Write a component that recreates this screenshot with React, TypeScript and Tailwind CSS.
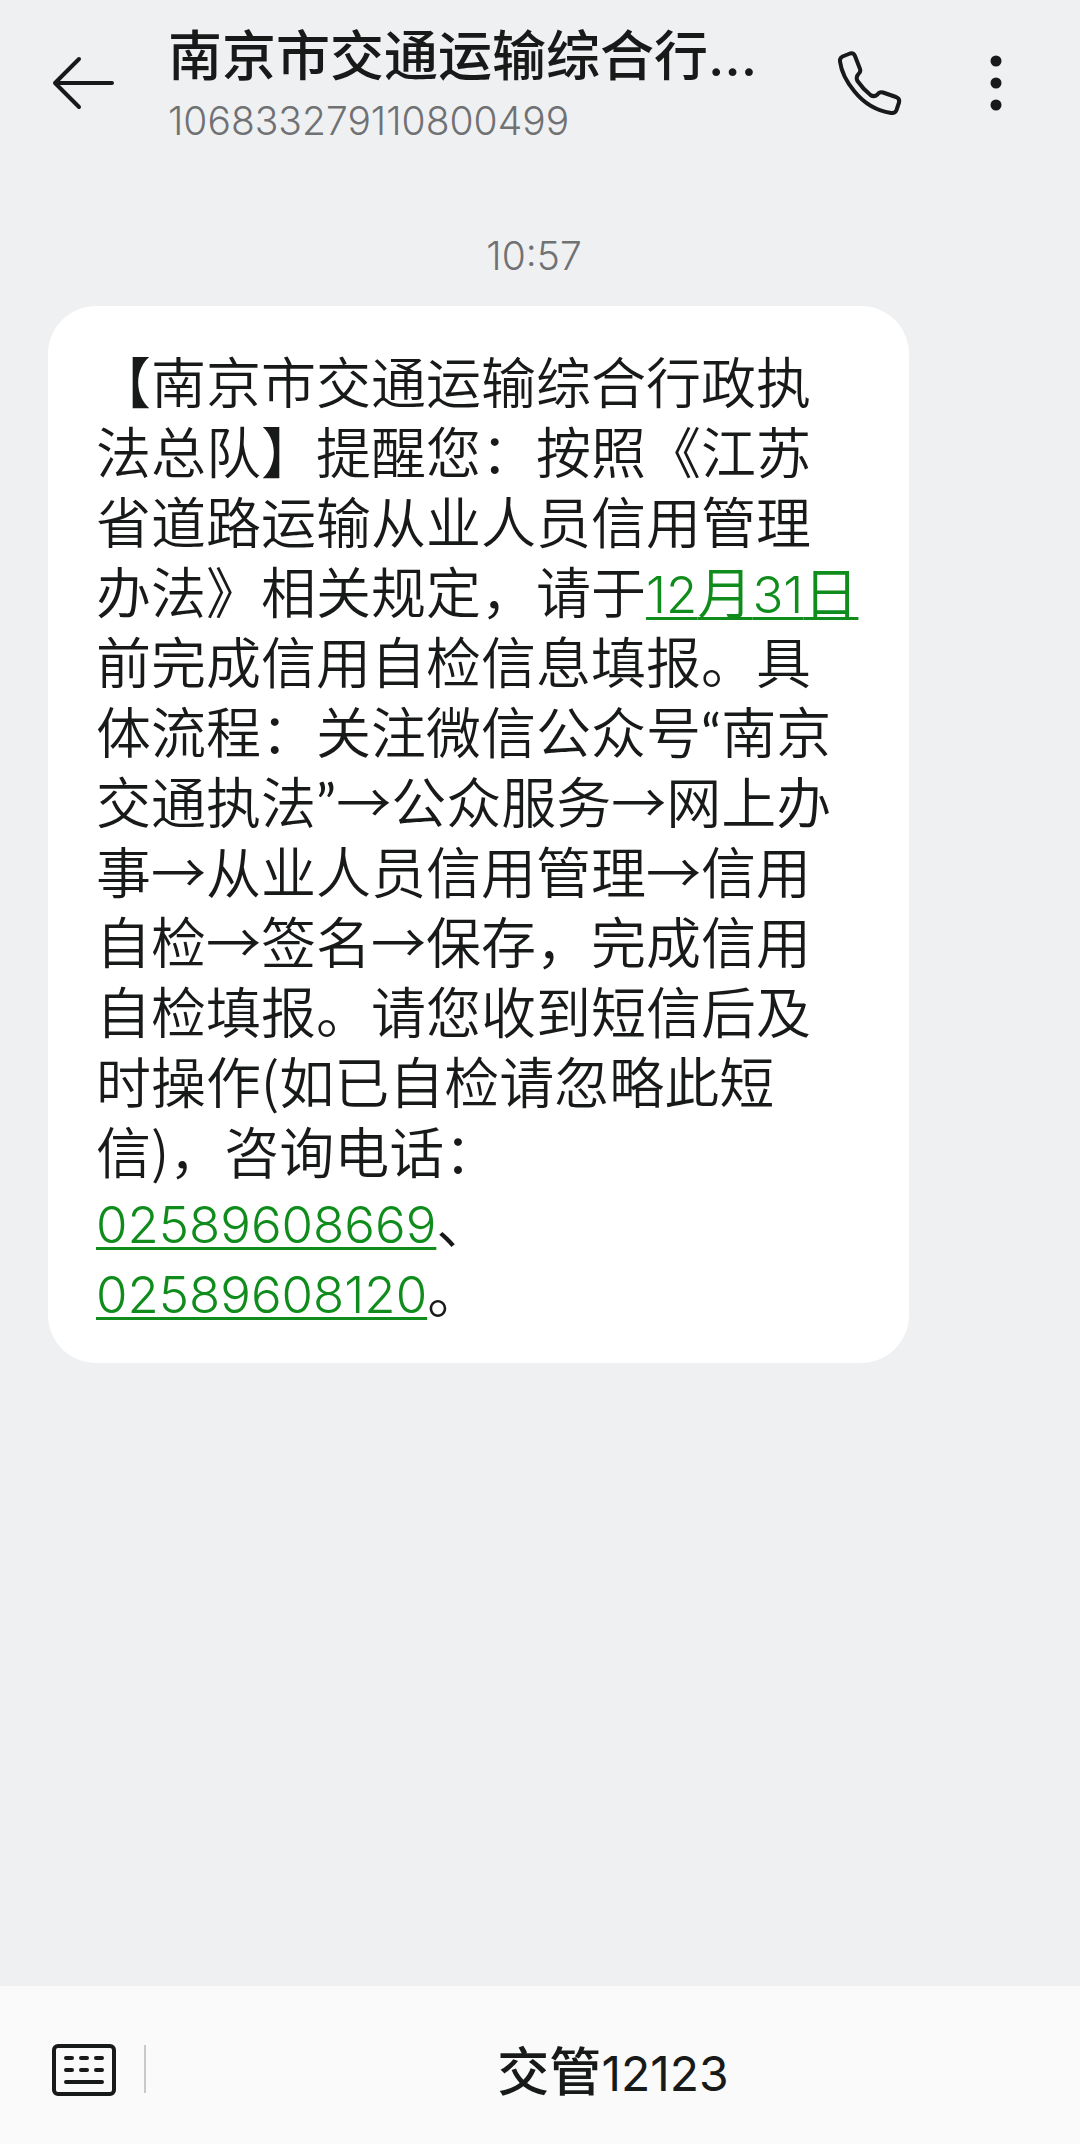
import type { ReactNode } from "react";

function Link({ href, children }: { href: string; children: ReactNode }) {
  return (
    <a
      href={href}
      className="leading-none text-[#108c1d] underline decoration-[3px] underline-offset-[4px] [text-decoration-skip-ink:none]"
    >
      {children}
    </a>
  );
}

function Digits({ children }: { children: ReactNode }) {
  return <span className="font-['Inter',sans-serif] text-[51px] leading-none font-[350]">{children}</span>;
}

function Quote({ children }: { children: ReactNode }) {
  return <span className="font-['Lato',sans-serif] leading-none font-normal">{children}</span>;
}

function BackIcon() {
  return (
    <svg width="64" height="56" viewBox="0 0 64 56" fill="none" stroke="currentColor" strokeWidth="4" strokeLinecap="round" strokeLinejoin="round" aria-hidden="true">
      <path d="M27 4L3 28L27 52M3 28H60" />
    </svg>
  );
}

function PhoneIcon() {
  return (
    <svg width="64" height="64" viewBox="0 0 64 64" fill="none" stroke="currentColor" strokeWidth="4" strokeLinecap="round" strokeLinejoin="round" aria-hidden="true">
      <path d="M4.500 5.500L12 2.500Q15.500 1.500 17 5L22 18Q23 21 20.500 23Q17.500 26 19.500 30Q25 38 32.500 44Q36 46.500 39.500 43.500Q41.500 40.500 45 41.500L58 46Q62 47.500 61 51.500L58.500 59Q57 62.500 53 62Q31 58.500 16.500 40.500Q4 25.500 2 10.500Q1.500 7 4.500 5.500Z" />
    </svg>
  );
}

function MoreIcon() {
  return (
    <svg width="12" height="56" viewBox="0 0 12 56" fill="currentColor" aria-hidden="true">
      <circle cx="6" cy="6" r="5.500" />
      <circle cx="6" cy="28" r="5.500" />
      <circle cx="6" cy="50" r="5.500" />
    </svg>
  );
}

function KeyboardIcon() {
  return (
    <svg width="64" height="52" viewBox="0 0 64 52" fill="none" stroke="currentColor" strokeWidth="4" strokeLinecap="round" aria-hidden="true">
      <rect x="2" y="2" width="60" height="48" rx="4" />
      <path d="M14 14H20M29 14H35M44 14H50M14 26H20M29 26H35M44 26H50M14 38H50" />
    </svg>
  );
}

const lines: ReactNode[] = [
  "【南京市交通运输综合行政执",
  "法总队】提醒您：按照《江苏",
  "省道路运输从业人员信用管理",
  <>办法》相关规定，请于<Link href="#date"><Digits>12</Digits>月<Digits>31</Digits>日</Link></>,
  "前完成信用自检信息填报。具",
  <>体流程：关注微信公众号<Quote>“</Quote>南京</>,
  <>交通执法<Quote>”</Quote>→公众服务→网上办</>,
  "事→从业人员信用管理→信用",
  "自检→签名→保存，完成信用",
  "自检填报。请您收到短信后及",
  "时操作(如已自检请忽略此短",
  "信)，咨询电话：",
  <><Link href="tel:02589608669"><Digits>02589608669</Digits></Link>、</>,
  <><Link href="tel:02589608120"><Digits>02589608120</Digits></Link>。</>,
];

export default function App() {
  return (
    <div
      lang="zh-CN"
      className="flex min-h-screen flex-col bg-[#eff0f2] font-['Noto_Sans_CJK_SC',sans-serif] text-[#181919]"
    >
      <header className="flex items-center pt-5 pr-[78px] pl-[52px]">
        <button type="button" aria-label="返回" className="shrink-0">
          <BackIcon />
        </button>
        <div className="ml-[52px] min-w-0 flex-1">
          <h1 className="text-[54px] leading-[66px] font-medium whitespace-nowrap">
            南京市交通运输综合行<span className="font-['Inter',sans-serif] leading-none">…</span>
          </h1>
          <p className="mt-[10px] font-['Inter',sans-serif] text-[39px] leading-[50px] font-light text-[#707172]">106833279110800499</p>
        </div>
        <button type="button" aria-label="拨打电话" className="mr-[88px] shrink-0">
          <PhoneIcon />
        </button>
        <button type="button" aria-label="更多" className="shrink-0">
          <MoreIcon />
        </button>
      </header>

      <main className="flex-1 pt-[82px] pr-[60px] pl-12">
        <time className="block text-center font-['Inter',sans-serif] text-[39px] leading-[56px] font-light text-[#707172]">10:57</time>
        <p className="mt-[22px] w-full max-w-[861px] rounded-[48px] bg-white px-12 pt-[38px] pb-[39px] text-[55px] leading-[70px] font-[350] [text-spacing-trim:space-all]">
          {lines.map((line, i) => (
            <span key={i} className="block whitespace-nowrap">
              {line}
            </span>
          ))}
        </p>
      </main>

      <footer className="flex h-[158px] items-center bg-[#fafafa] pl-[52px]">
        <button type="button" aria-label="键盘" className="mt-[10px] shrink-0">
          <KeyboardIcon />
        </button>
        <div className="mt-2 ml-7 h-12 w-[2px] shrink-0 bg-[#c9c9c9]" />
        <button type="button" className="mt-2 flex-1 text-center text-[52px] leading-[64px] font-medium">
          交管<span className="font-['Inter',sans-serif] text-[48px] leading-none font-normal">12123</span>
        </button>
      </footer>
    </div>
  );
}
